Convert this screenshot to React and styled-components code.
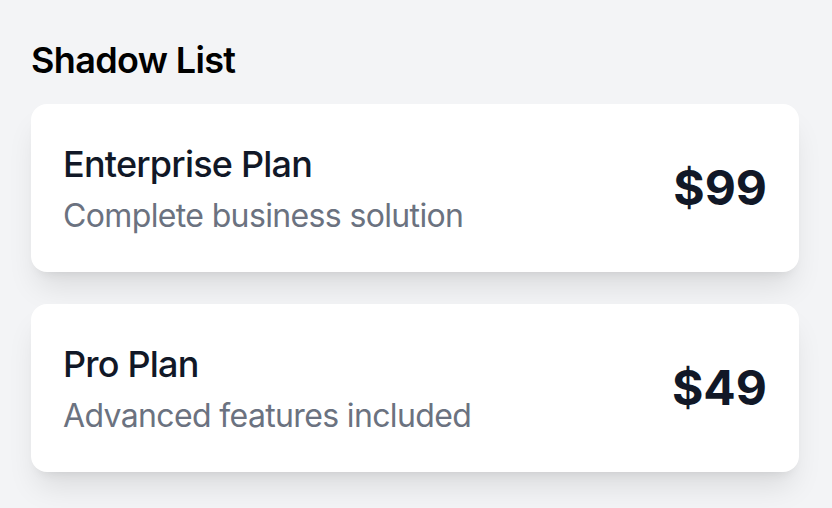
import React from "react";
import styled, { createGlobalStyle } from "styled-components";

const Global = createGlobalStyle`
  html, body { margin: 0; padding: 0; background: #f3f4f6; }
  body { font-family: Inter, "Noto Sans", sans-serif; -webkit-font-smoothing: antialiased; }
`;

const Page = styled.div`
  padding: 32px 33px 32px 31px;
  background: #f3f4f6;
  min-height: 508px;
  box-sizing: border-box;
`;

const Heading = styled.h2`
  margin: 0 0 16px;
  font-size: 36px;
  line-height: 56px;
  font-weight: 600;
  letter-spacing: -0.018em;
  color: #000;
`;

const List = styled.div`
  display: flex;
  flex-direction: column;
  gap: 32px;
`;

const Card = styled.div`
  display: flex;
  align-items: center;
  justify-content: space-between;
  padding: 32px;
  background: #fff;
  border-radius: 16px;
  box-shadow: 0 20px 30px -6px rgba(0, 0, 0, 0.1), 0 8px 12px -8px rgba(0, 0, 0, 0.1);
`;

const Info = styled.div`
  display: flex;
  flex-direction: column;
`;

const Title = styled.div`
  font-size: 36px;
  line-height: 56px;
  font-weight: 500;
  letter-spacing: -0.022em;
  color: #111827;
`;

const Subtitle = styled.div`
  font-size: 32px;
  line-height: 48px;
  letter-spacing: -0.02em;
  color: #6b7280;
`;

const Price = styled.div`
  font-size: 48px;
  line-height: 64px;
  font-weight: 700;
  color: #111827;
`;

const plans = [
  { name: "Enterprise Plan", desc: "Complete business solution", price: "$99" },
  { name: "Pro Plan", desc: "Advanced features included", price: "$49" },
];

export default function App() {
  return (
    <>
      <Global />
      <Page>
        <Heading>Shadow List</Heading>
        <List>
          {plans.map((p) => (
            <Card key={p.name}>
              <Info>
                <Title>{p.name}</Title>
                <Subtitle>{p.desc}</Subtitle>
              </Info>
              <Price>{p.price}</Price>
            </Card>
          ))}
        </List>
      </Page>
    </>
  );
}
